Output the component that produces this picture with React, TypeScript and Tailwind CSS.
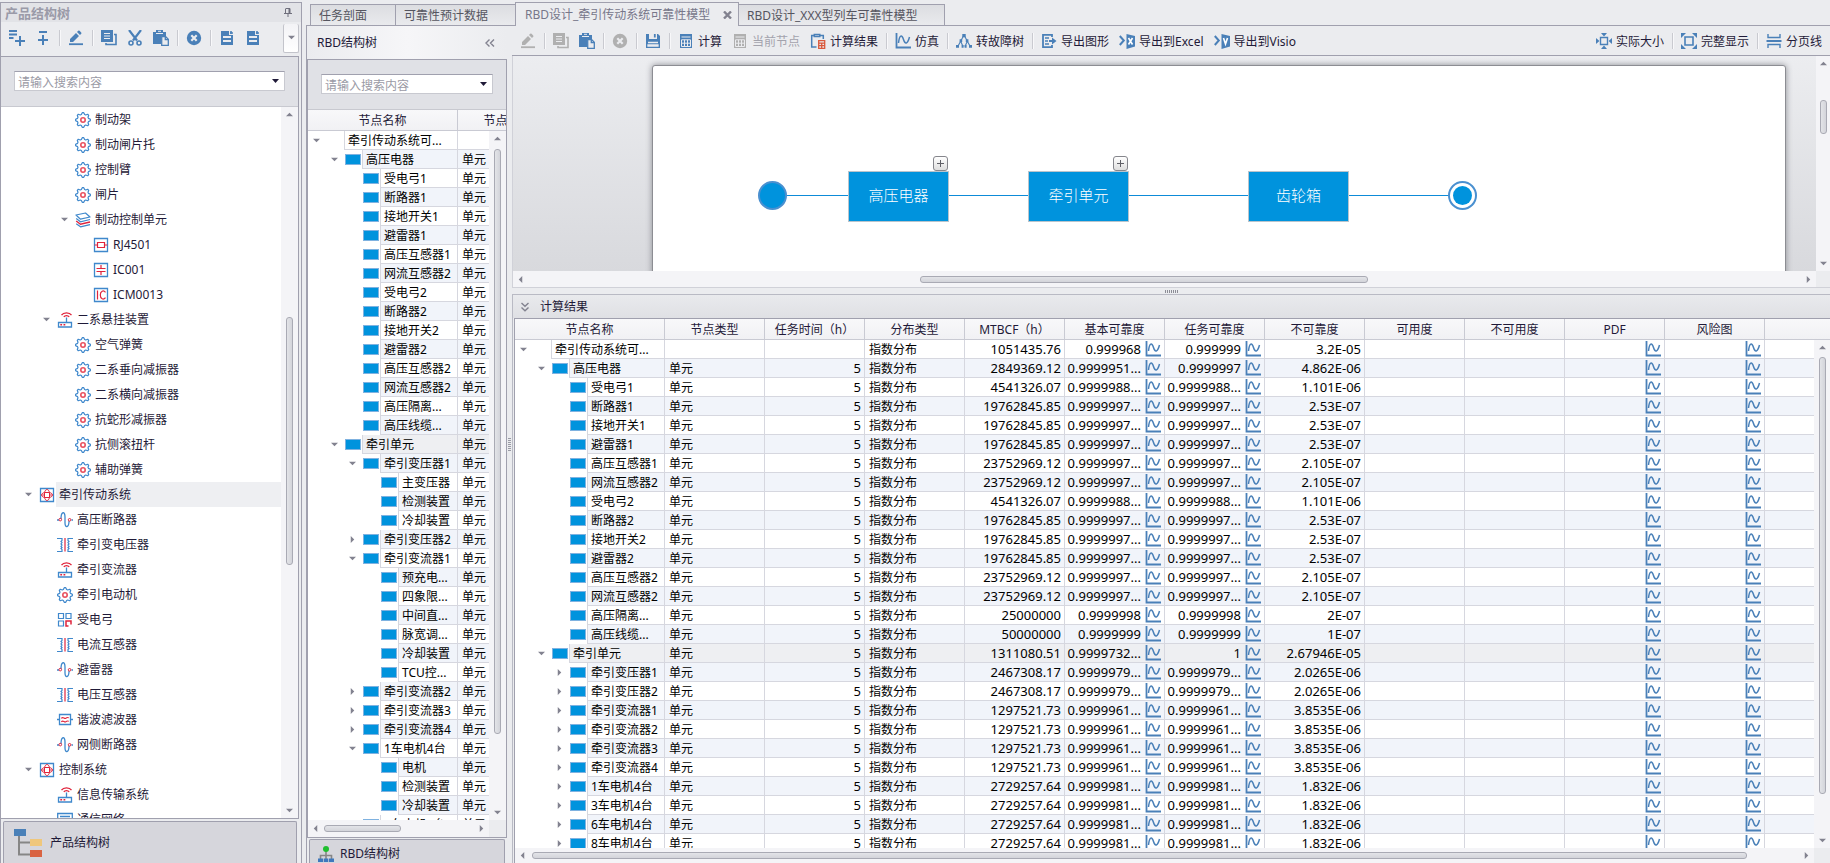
import type { ReactNode } from "react";
import clsx from "clsx";

/* ------------------------------------------------------------------ icons */

const BLUE = "#4a80b8";
const GRAY = "#b0b0b0";
const RED = "#e0243c";
const LINE = "#3f88cc";

function Svg({ children }: { children: ReactNode }) {
  return (
    <svg width="16" height="16" viewBox="0 0 16 16" fill="none" aria-hidden className="shrink-0">
      {children}
    </svg>
  );
}

const AddSiblingIcon = () => (
  <Svg>
    <path d="M0 1h8M0 4.5h8M0 8h4.500" stroke={BLUE} strokeWidth="2" />
    <path d="M11 6v10M6 11h10" stroke={BLUE} strokeWidth="2" />
  </Svg>
);
const AddChildIcon = () => (
  <Svg>
    <path d="M4 2h8M8 5v10M3 10h10" stroke={BLUE} strokeWidth="2" />
  </Svg>
);
const PencilIcon = ({ color = BLUE }: { color?: string }) => (
  <Svg>
    <path d="M1 14.2h14" stroke={color} strokeWidth="1.8" />
    <path d="M2 12v-3l6-6 3 3-6 6zM9 2l1.2-1.2a1 1 0 0 1 1.4 0l1.6 1.6a1 1 0 0 1 0 1.4L12 5z" fill={color} />
  </Svg>
);
const CopyIcon = ({ color = BLUE }: { color?: string }) => (
  <Svg>
    <path d="M0 0h12v12H0z" fill={color} />
    <path d="M3 3.5h6M3 6h6M3 8.5h6" stroke="#ebecef" />
    <path d="M13 4.5h2v10H5V13" stroke={color} strokeWidth="1.6" />
  </Svg>
);
const ScissorsIcon = () => (
  <Svg>
    <path d="M2 0l8 10.5M14 0L6 10.5" stroke={BLUE} strokeWidth="2.2" />
    <circle cx="4" cy="13" r="2" stroke={BLUE} strokeWidth="1.6" />
    <circle cx="12" cy="13" r="2" stroke={BLUE} strokeWidth="1.6" />
  </Svg>
);
const PasteIcon = () => (
  <Svg>
    <path d="M0 2h3V0h7v2h3v4H8v8H0z" fill={BLUE} />
    <path d="M3 3.5h7M5 1.3h3" stroke="#ebecef" />
    <path d="M8.7 6.7h4l2.6 2.6v6H8.7z" fill="#ebecef" stroke={BLUE} strokeWidth="1.3" />
    <path d="M12.3 6.5v3.2h3.2" stroke={BLUE} strokeWidth="1.3" />
  </Svg>
);
const CloseCircleIcon = ({ color = BLUE }: { color?: string }) => (
  <Svg>
    <circle cx="8" cy="8" r="7.2" fill={color} />
    <path d="M5.3 5.3l5.4 5.4M10.7 5.3l-5.4 5.4" stroke="#ebecef" strokeWidth="2.2" />
  </Svg>
);
const DocIcon = () => (
  <Svg>
    <path d="M2 1h8v4h4v10H2z" fill={BLUE} />
    <path d="M11 3h3M12 1v3" stroke={BLUE} strokeWidth="1.6" />
    <path d="M4 7h8M4 11h8" stroke="#ebecef" strokeWidth="2" />
  </Svg>
);
const SaveIcon = () => (
  <Svg>
    <path d="M1 1h3v5h8V1h1l2 2v12H1z" fill={BLUE} />
    <path d="M9.8 1v3.5" stroke={BLUE} strokeWidth="1.8" />
    <path d="M3 9.5h10M3 12h10v1H3z" stroke="#ebecef" strokeWidth="1.3" />
  </Svg>
);
const CalcIcon = ({ color = BLUE }: { color?: string }) => (
  <Svg>
    <path d="M2 1h12v14H2z" fill={color} />
    <path d="M3.5 4h9M3.5 6.8h9v6.7h-9zM3.5 10.2h9M6.5 6.8v6.7M9.5 6.8v6.7" stroke="#ebecef" />
  </Svg>
);
const ResultIcon = () => (
  <Svg>
    <path d="M6.5 14H1.7V2.5h2.6M10 2.5h3.3V6M4.3 3.6V1.5h5.500v2.100z" stroke={BLUE} strokeWidth="1.5" />
    <path d="M8.7 7.7h6v7.600h-6zM8.700 10.200h6M8.700 12.700h6M11.700 10.200v5" stroke="#d9593d" strokeWidth="1.3" />
  </Svg>
);
const CurveIcon = () => (
  <Svg>
    <path d="M1.5 0v14.500H16" stroke={BLUE} strokeWidth="1.8" />
    <path d="M3.500 10C4.500 1.500 7 1.500 8.500 6.500s4 5 6-2.500" stroke={BLUE} strokeWidth="1.5" />
  </Svg>
);
const FaultTreeIcon = () => (
  <Svg>
    <path d="M8 2L1.800 13.500M8 2l6.200 11.500M4.800 8.500L7 13.500M11.200 8.500L9 13.500" stroke={BLUE} strokeWidth="1.1" />
    <path d="M6.300 1h3.400v3.200H6.300zM3.600 6.300h2.600v2.600H3.600zM9.800 6.300h2.600v2.600H9.800zM0 12h3v2.800H0zM5.600 12h2v2.800h-2zM8.600 12h2v2.800h-2zM13 12h3v2.800h-3z" fill={BLUE} />
  </Svg>
);
const ExportIcon = () => (
  <Svg>
    <path d="M11 4V1.800H2v12.400h9V12" stroke={BLUE} strokeWidth="1.8" />
    <path d="M4 5h4M4 8h3M4 11h4" stroke={BLUE} strokeWidth="1.6" />
    <path d="M8 7h3V4.500l4.500 3.500L11 11.500V9H8z" fill={BLUE} />
  </Svg>
);
const OfficeIcon = ({ mark }: { mark: "x" | "v" }) => (
  <Svg>
    <path d="M0.8 3l4 4.500-4 4.500" stroke={BLUE} strokeWidth="2" />
    <path d="M7.500 1L16 3v10.500L7.500 16z" fill={BLUE} />
    <path d={mark === "x" ? "M9.500 5l4 6.500M13.500 5l-4 6.500" : "M9.500 5l2 6 2-6"} stroke="#fff" strokeWidth="1.6" />
  </Svg>
);
const ActualSizeIcon = () => (
  <Svg>
    <path d="M4.500 4.500h7v7h-7z" stroke={BLUE} strokeWidth="1.4" />
    <path d="M5 0h6L8 3.400zM5 16h6l-3-3.400zM0 5v6l3.400-3zM16 5v6l-3.400-3z" fill={BLUE} />
  </Svg>
);
const FitIcon = () => (
  <Svg>
    <path d="M4 4h8v8H4z" stroke={BLUE} strokeWidth="1.6" />
    <path d="M0 0h5L0 5zM16 0h-5l5 5zM0 16h5l-5-5zM16 16h-5l5-5z" fill={BLUE} />
  </Svg>
);
const PageBreakIcon = () => (
  <Svg>
    <path d="M2 1v3.500h12V1M2 15v-3.500h12V15" stroke={BLUE} strokeWidth="1.4" />
    <path d="M0.500 8h15" stroke={BLUE} strokeWidth="2" />
  </Svg>
);

// eight teeth: four points per tooth, outer pair then inner pair
const gearPath =
  Array.from({ length: 32 }, (_, i) => {
    const radius = i % 4 < 2 ? 7.4 : 5.7;
    const angle = ((i - 0.5) / 32) * Math.PI * 2;
    const x = 8 + radius * Math.sin(angle);
    const y = 8 - radius * Math.cos(angle);
    return `${i ? "L" : "M"}${x.toFixed(2)} ${y.toFixed(2)}`;
  }).join("") + "z";

const treeIcons = {
  gear: (
    <Svg>
      <path d={gearPath} stroke={LINE} strokeWidth="1.2" strokeLinejoin="round" />
      <circle cx="8" cy="8" r="2.2" stroke="#e8505e" strokeWidth="1.6" />
    </Svg>
  ),
  layers: (
    <Svg>
      <path d="M1 3l9.500-2L15 5 5.500 7.200zM1.200 11.800l4.300 3 9.500-2.200" stroke={LINE} strokeWidth="1.2" strokeLinejoin="round" />
      <path d="M1.200 6.500l4.300 3.300L15 7.500" stroke={LINE} strokeWidth="1.1" />
      <path d="M1.200 9l4.300 3.300L15 10" stroke={RED} strokeWidth="1.4" />
    </Svg>
  ),
  resistor: (
    <Svg>
      <path d="M1.500 1.500h13v13h-13z" stroke={LINE} strokeWidth="1.3" />
      <path d="M1.500 8H4M12 8h2.500M4.500 5.500h7v5h-7z" stroke={RED} strokeWidth="1.2" />
    </Svg>
  ),
  capacitor: (
    <Svg>
      <path d="M1.500 1.500h13v13h-13z" stroke={LINE} strokeWidth="1.3" />
      <path d="M3.500 6.500h9M3.500 9.500h9M8 3v3.500M8 9.500V13" stroke={RED} strokeWidth="1.2" />
    </Svg>
  ),
  chip: (
    <Svg>
      <path d="M1.500 1.500h13v13h-13z" stroke={LINE} strokeWidth="1.3" />
      <path d="M4.500 3.500v9M12.500 5.300C10.500 2.800 7.300 4 7.300 8s3.200 5.200 5.200 2.700" stroke={RED} strokeWidth="1.2" />
    </Svg>
  ),
  router: (
    <Svg>
      <path d="M1.500 10.500h13v4.500h-13zM9.500 10V5.500" stroke={LINE} strokeWidth="1.3" />
      <path d="M4.500 3.200C6.500.2 12.500.2 14.500 3.200M6.800 4.800c1.200-1.700 4.200-1.700 5.400 0" stroke={RED} strokeWidth="1.3" />
      <path d="M3.300 12h1.800v1.600H3.300zM6.500 12h1.800v1.600H6.500z" fill={RED} />
    </Svg>
  ),
  system: (
    <Svg>
      <path d="M1.500 1.500h13v13h-13z" stroke={LINE} strokeWidth="1.3" />
      <path
        d="M5.500 5.500h5v5h-5zM2.500 8h3M10.500 8h3M5.500 5.500C6 3.500 7 2.500 8 2.500s2 1 2.500 3M5.500 10.500c.5 2 1.500 3 2.500 3s2-1 2.500-3M5.500 5.500c-2 .5-3 1.500-3 2.500s1 2 3 2.500M10.500 5.500c2 .5 3 1.500 3 2.500s-1 2-3 2.500"
        stroke={RED}
      />
    </Svg>
  ),
  breaker: (
    <Svg>
      <path d="M0 8h2M14.500 8H16M4 7c0-8 4-8 4-2v6c0 5 4 5 4-2" stroke={LINE} strokeWidth="1.3" />
      <circle cx="3.300" cy="7.600" r="1.300" stroke={RED} />
      <circle cx="12.600" cy="7.800" r="1.300" stroke={RED} />
    </Svg>
  ),
  transformer: (
    <Svg>
      <path
        d="M0 1.500h5v2l-1 1 1 1-1 1.500 1 1-1 1.500 1 1-1 1 1 1v2H0M16 1.500h-5v2l1 1-1 1 1 1.500-1 1 1 1.500-1 1 1 1-1 1v2h5"
        stroke={LINE}
        strokeWidth="1.2"
      />
      <path d="M8 1v13.500" stroke={RED} strokeWidth="1.2" />
    </Svg>
  ),
  grid: (
    <Svg>
      <path d="M1.500 1.500h5v5h-5zM9 1.500h5v5H9zM1.500 9h5v5h-5z" stroke={LINE} strokeWidth="1.2" />
      <path d="M11.500 14H9V9h5v3.500" stroke={RED} strokeWidth="1.5" />
    </Svg>
  ),
  filter: (
    <Svg>
      <path d="M2.500 2.500h11v10h-11zM0 7.500h2.500M13.500 7.500H16" stroke={LINE} strokeWidth="1.3" />
      <path d="M4.300 6.300c2-2.200 3 1.200 4.500 0s2-.8 3-.5M4.300 9.800c2-2.200 3 1.200 4.500 0s2-.8 3-.5" stroke={RED} strokeWidth="1.1" />
    </Svg>
  ),
  network: (
    <Svg>
      <path d="M.7 1.500h14.600V15H.7zM3 4.500h10" stroke={LINE} strokeWidth="1.3" />
      <path d="M3.300 7h2v1.800h-2zM7 7h2v1.800H7z" fill={RED} />
    </Svg>
  ),
};

function Arrow({ dir }: { dir: "up" | "down" | "left" | "right" }) {
  const d = {
    up: "M0 6l4-4 4 4z",
    down: "M0 2l4 4 4-4z",
    left: "M6 0L2 4l4 4z",
    right: "M2 0l4 4-4 4z",
  }[dir];
  return (
    <svg width="7" height="7" viewBox="0 0 8 8" aria-hidden className="shrink-0">
      <path d={d} fill="#82828f" />
    </svg>
  );
}

/* --------------------------------------------------------------- controls */

function ToolButton({ icon, label, name, disabled }: { icon: ReactNode; label?: string; name?: string; disabled?: boolean }) {
  return (
    <button
      type="button"
      aria-label={name}
      disabled={disabled}
      className="flex shrink-0 items-center gap-1 whitespace-nowrap text-[#1f1a38] disabled:text-[#a3a3ad]"
    >
      {icon}
      {label && <span className="pt-[2px]">{label}</span>}
    </button>
  );
}

const Sep = () => <span className="h-4 w-px shrink-0 bg-[#c9cad0] shadow-[1px_0_0_#f8f8fa]" />;

const Group = ({ children }: { children: ReactNode }) => <div className="flex items-center gap-[10px]">{children}</div>;

function SearchBox({ id }: { id: string }) {
  return (
    <div className="h-[50px] shrink-0 border-b border-[#c8c9d0] bg-[#e0e1e6] px-[13px] pt-[14px]">
      <div className="flex h-5 items-center border border-[#c8c9d0] border-t-[#a0a0ae] bg-white pl-[3px] pr-[5px]">
        <input
          id={id}
          type="text"
          aria-label="搜索"
          placeholder="请输入搜索内容"
          className="min-w-0 flex-1 bg-transparent pt-[3px] text-[12px] outline-none placeholder:text-[#9a9aa5]"
        />
        <button type="button" aria-label="展开搜索选项" className="shrink-0">
          <svg width="7" height="4" viewBox="0 0 7 4" aria-hidden>
            <path d="M0 0h7L3.500 4z" fill="#1f1a38" />
          </svg>
        </button>
      </div>
    </div>
  );
}

/** `before`, `size` and `after` share the free length of the track. */
function ScrollBar({ vertical, before, size, after, className }: { vertical?: boolean; before: number; size: number; after: number; className?: string }) {
  return (
    <div
      aria-hidden
      className={clsx("flex shrink-0 items-center bg-[#f4f4f7]", vertical ? "flex-col py-1" : "px-1", className)}
    >
      <Arrow dir={vertical ? "up" : "left"} />
      <span style={{ flexGrow: before }} />
      <span
        style={{ flexGrow: size }}
        className={clsx(
          "rounded-[3px] border border-[#a9aab4] from-[#e3e4e8] to-[#d3d4da]",
          vertical ? "w-[7px] bg-linear-to-r" : "h-[7px] bg-linear-to-b",
        )}
      />
      <span style={{ flexGrow: after }} />
      <Arrow dir={vertical ? "down" : "right"} />
    </div>
  );
}

/* ----------------------------------------------------------- product tree */

type ProductRow = { level: 1 | 2 | 3 | 4; icon: keyof typeof treeIcons; label: string; open?: boolean; selected?: boolean };

const productRows: ProductRow[] = [
  { level: 3, icon: "gear", label: "制动架" },
  { level: 3, icon: "gear", label: "制动闸片托" },
  { level: 3, icon: "gear", label: "控制臂" },
  { level: 3, icon: "gear", label: "闸片" },
  { level: 3, icon: "layers", label: "制动控制单元", open: true },
  { level: 4, icon: "resistor", label: "RJ4501" },
  { level: 4, icon: "capacitor", label: "IC001" },
  { level: 4, icon: "chip", label: "ICM0013" },
  { level: 2, icon: "router", label: "二系悬挂装置", open: true },
  { level: 3, icon: "gear", label: "空气弹簧" },
  { level: 3, icon: "gear", label: "二系垂向减振器" },
  { level: 3, icon: "gear", label: "二系横向减振器" },
  { level: 3, icon: "gear", label: "抗蛇形减振器" },
  { level: 3, icon: "gear", label: "抗侧滚扭杆" },
  { level: 3, icon: "gear", label: "辅助弹簧" },
  { level: 1, icon: "system", label: "牵引传动系统", open: true, selected: true },
  { level: 2, icon: "breaker", label: "高压断路器" },
  { level: 2, icon: "transformer", label: "牵引变电压器" },
  { level: 2, icon: "router", label: "牵引变流器" },
  { level: 2, icon: "gear", label: "牵引电动机" },
  { level: 2, icon: "grid", label: "受电弓" },
  { level: 2, icon: "transformer", label: "电流互感器" },
  { level: 2, icon: "breaker", label: "避雷器" },
  { level: 2, icon: "transformer", label: "电压互感器" },
  { level: 2, icon: "filter", label: "谐波滤波器" },
  { level: 2, icon: "breaker", label: "网侧断路器" },
  { level: 1, icon: "system", label: "控制系统", open: true },
  { level: 2, icon: "router", label: "信息传输系统" },
  { level: 2, icon: "network", label: "通信网络" },
];

const productIndent = { 1: "pl-[24px]", 2: "pl-[42px]", 3: "pl-[60px]", 4: "pl-[78px]" };

function ProductPanel() {
  return (
    <aside className="mt-[2px] flex w-[302px] shrink-0 flex-col border-x border-t border-[#a0a0ae]">
      <header className="flex h-[19px] shrink-0 items-center justify-between bg-[#e2e3e7] pl-1 pr-[9px]">
        <h2 className="text-[13px] font-bold text-[#9a9aa8]">产品结构树</h2>
        <button type="button" aria-label="固定面板">
          <svg width="8" height="9" viewBox="0 0 8 9" fill="none" aria-hidden>
            <path d="M2 .5h4v5M1.500.5v5M0 5.500h8M4 5.500V9" stroke="#6f6f7c" />
            <path d="M4.500 1h1.500v4.500H4.500z" fill="#6f6f7c" />
          </svg>
        </button>
      </header>
      <div className="flex h-[34px] shrink-0 items-center justify-between pb-[2px] pl-2 pr-[2px]">
        <div className="flex items-center gap-2">
          <Group>
            <ToolButton name="添加同级" icon={<AddSiblingIcon />} />
            <ToolButton name="添加子级" icon={<AddChildIcon />} />
          </Group>
          <Sep />
          <ToolButton name="编辑" icon={<PencilIcon />} />
          <Sep />
          <Group>
            <ToolButton name="复制" icon={<CopyIcon />} />
            <ToolButton name="剪切" icon={<ScissorsIcon />} />
            <ToolButton name="粘贴" icon={<PasteIcon />} />
          </Group>
          <Sep />
          <ToolButton name="删除" icon={<CloseCircleIcon />} />
          <Sep />
          <Group>
            <ToolButton name="导入" icon={<DocIcon />} />
            <ToolButton name="导出" icon={<DocIcon />} />
          </Group>
        </div>
        <button
          type="button"
          aria-label="更多"
          className="flex h-[29px] w-4 items-center justify-center rounded-[2px] border-x border-b border-[#c3c4cb] bg-linear-to-b from-[#f3f3f6] to-white"
        >
          <Arrow dir="down" />
        </button>
      </div>
      <div className="mr-[2px] flex min-h-0 flex-1 flex-col border-y border-r border-[#a0a0ae] bg-white">
        <SearchBox id="product-search" />
        <div className="flex min-h-0 flex-1">
          <ul className="min-w-0 flex-1 overflow-hidden">
            {productRows.map((row, i) => (
              <li key={i} className={clsx("flex h-[25px] items-center", productIndent[row.level])}>
                <span className="flex w-[14px] shrink-0">{row.open && <Arrow dir="down" />}</span>
                {treeIcons[row.icon]}
                <span
                  className={clsx(
                    "ml-px flex h-full flex-1 items-center whitespace-nowrap pl-[3px] text-[#1f1a38]",
                    row.selected && "bg-[#eeeff2]",
                  )}
                >
                  {row.label}
                </span>
              </li>
            ))}
          </ul>
          <ScrollBar vertical before={200} size={246} after={243} className="w-[17px]" />
        </div>
      </div>
      <button
        type="button"
        className="ml-[2px] mr-1 mt-[2px] flex h-[42px] shrink-0 items-center gap-2 rounded-t-[2px] border-x border-t border-[#a0a0ae] bg-[#d6d6dc] pl-[10px] pt-px text-[#1f1a38]"
      >
        <svg width="28" height="28" viewBox="0 0 28 28" fill="none" aria-hidden>
          <path d="M5 7v18.500h11M5 13.500h11" stroke="#868686" strokeWidth="2" />
          <path d="M0 0h12v7H0z" fill="#4a80b8" />
          <path d="M16 10h12v7H16z" fill="#efc77c" />
          <path d="M16 21h12v7H16z" fill="#d96342" />
        </svg>
        产品结构树
      </button>
    </aside>
  );
}

/* ------------------------------------------------------------ grid pieces */

type Level = 0 | 1 | 2 | 3;

const gridIndent = { 0: "w-[36px]", 1: "w-[54px]", 2: "w-[72px]", 3: "w-[90px]" };

const th = "border-b border-r border-[#c9cad3] bg-linear-to-b from-[#f8f8fa] to-[#f1f1f4] px-0 pb-0 pt-px text-center font-normal text-[#1f1a38]";
const td = "border-b border-r border-[#d6d7df]";
const textCell = "pb-0 pl-1 pr-0 pt-[2px] leading-[16px]";
const numberCell = "py-0 pl-0 pr-[3px] text-right text-[13px]";

function rowColor(i: number, selected?: boolean) {
  if (selected) return "bg-[#eeeff2]";
  return i % 2 ? "bg-[#f1f4fa]" : "bg-white";
}

function NameCell({ level, state, label, color }: { level: Level; state?: "open" | "closed"; label: string; color: string }) {
  return (
    <td className="h-[19px] border-r border-[#d6d7df] bg-white p-0">
      <div className="flex h-[19px]">
        <span className={clsx("flex shrink-0 items-center justify-end gap-[7px] pr-px", gridIndent[level])}>
          {state && <Arrow dir={state === "open" ? "down" : "right"} />}
          {level > 0 ? <span className="h-[11px] w-4 border border-[#7fb2e0] bg-[#0093dd]" /> : <span className="w-4" />}
        </span>
        <span
          className={clsx(
            "min-w-0 flex-1 overflow-hidden whitespace-nowrap border-b border-l border-[#d6d7df] pl-[3px] pt-[2px] leading-[16px]",
            color,
          )}
        >
          {label}
        </span>
      </div>
    </td>
  );
}

/* --------------------------------------------------------------- RBD tree */

type RbdRow = [level: Level, label: string, state?: "open" | "closed"];

const rbdRows: RbdRow[] = [
  [0, "牵引传动系统可...", "open"],
  [1, "高压电器", "open"],
  [2, "受电弓1"],
  [2, "断路器1"],
  [2, "接地开关1"],
  [2, "避雷器1"],
  [2, "高压互感器1"],
  [2, "网流互感器2"],
  [2, "受电弓2"],
  [2, "断路器2"],
  [2, "接地开关2"],
  [2, "避雷器2"],
  [2, "高压互感器2"],
  [2, "网流互感器2"],
  [2, "高压隔离..."],
  [2, "高压线缆..."],
  [1, "牵引单元", "open"],
  [2, "牵引变压器1", "open"],
  [3, "主变压器"],
  [3, "检测装置"],
  [3, "冷却装置"],
  [2, "牵引变压器2", "closed"],
  [2, "牵引变流器1", "open"],
  [3, "预充电..."],
  [3, "四象限..."],
  [3, "中间直..."],
  [3, "脉宽调..."],
  [3, "冷却装置"],
  [3, "TCU控..."],
  [2, "牵引变流器2", "closed"],
  [2, "牵引变流器3", "closed"],
  [2, "牵引变流器4", "closed"],
  [2, "1车电机4台", "open"],
  [3, "电机"],
  [3, "检测装置"],
  [3, "冷却装置"],
  [2, "3车电机4台", "closed"],
];

function RbdPanel() {
  return (
    <aside className="flex w-[201px] shrink-0 flex-col border-l border-[#a0a0ae]">
      <header className="flex h-[33px] shrink-0 items-center justify-between bg-linear-to-r from-[#ebecef] via-[#f6f6f8] to-[#ebecef] pl-[10px] pr-3">
        <h2 className="text-[#1f1a38]">RBD结构树</h2>
        <button type="button" aria-label="折叠">
          <svg width="10" height="8" viewBox="0 0 10 8" fill="none" aria-hidden>
            <path d="M4.500.5L1 4l3.500 3.500M9 .5L5.500 4 9 7.500" stroke="#82828f" strokeWidth="1.4" />
          </svg>
        </button>
      </header>
      <div className="flex min-h-0 flex-1 flex-col border border-[#a0a0ae] bg-white">
        <SearchBox id="rbd-search" />
        <div className="relative min-h-0 flex-1 overflow-hidden">
          <table className="w-[250px] table-fixed border-separate border-spacing-0 text-black">
            <colgroup>
              <col className="w-[150px]" />
              <col className="w-[100px]" />
            </colgroup>
            <thead>
              <tr className="h-[21px]">
                <th className={th}>节点名称</th>
                <th className={th}>节点类型</th>
              </tr>
            </thead>
            <tbody>
              {rbdRows.map(([level, label, state], i) => {
                const color = rowColor(i, label === "牵引单元");
                return (
                  <tr key={i}>
                    <NameCell level={level} state={state} label={label} color={color} />
                    <td className={clsx(td, textCell, color)}>{level > 0 && "单元"}</td>
                  </tr>
                );
              })}
            </tbody>
          </table>
          <ScrollBar vertical before={7} size={588} after={76} className="absolute bottom-0 right-0 top-[21px] w-[17px]" />
        </div>
        <div className="flex h-[17px] shrink-0 bg-[#ebecef]">
          <ScrollBar before={5} size={75} after={78} className="flex-1" />
          <span className="w-[17px]" />
        </div>
      </div>
      <button
        type="button"
        className="mx-[2px] mt-px flex h-[24px] shrink-0 items-center gap-[6px] overflow-hidden rounded-t-[2px] border-x border-t border-[#a0a0ae] bg-[#d6d6dc] pl-2 pt-1 text-[#1f1a38]"
      >
        <svg width="16" height="16" viewBox="0 0 16 16" fill="none" aria-hidden>
          <path d="M8 5v8M2.500 13V9.500h11V13" stroke="#868686" strokeWidth="1.6" />
          <circle cx="8" cy="3" r="3" fill="#1fbf2f" />
          <path d="M0 12.500h5V16H0zM5.700 12.500h4.600V16H5.700zM11 12.500h5V16h-5z" fill="#3f78bd" />
        </svg>
        RBD结构树
      </button>
    </aside>
  );
}

/* ----------------------------------------------------------------- canvas */

const blocks = [
  { label: "高压电器", pos: "left-[195px]", expandable: true },
  { label: "牵引单元", pos: "left-[375px]", expandable: true },
  { label: "齿轮箱", pos: "left-[595px]", expandable: false },
];

function Canvas() {
  return (
    <section aria-label="可靠性框图" className="flex h-[232px] shrink-0 flex-col border-b border-l border-[#d0d1d8]">
      <div className="flex min-h-0 flex-1">
        <div className="min-w-0 flex-1 overflow-hidden bg-linear-to-b from-[#ecedf0] to-[#d8d9dd] pl-[139px] pr-[30px] pt-[9px]">
          <div className="relative h-[240px] rounded-[3px] border border-[#8c8d93] bg-white shadow-[0_0_6px_#8c8d93]">
            <span className="absolute left-[134px] top-[129px] h-px w-[663px] bg-[#0d8bd8]" />
            <span className="absolute left-[105px] top-[115px] size-[29px] rounded-full border-2 border-[#4a90d0] bg-[#0093dd]" />
            {blocks.map((b) => (
              <div
                key={b.label}
                className={clsx(
                  "absolute top-[105px] flex h-[51px] w-[101px] items-center justify-center border border-[#b9c4cc] bg-[#0093dd] pb-[3px] text-[15px] font-light text-white",
                  b.pos,
                )}
              >
                {b.label}
                {b.expandable && (
                  <button
                    type="button"
                    aria-label={`展开${b.label}`}
                    className="absolute -top-4 right-0 flex size-[15px] items-center justify-center rounded-[3px] border border-[#85868c] bg-linear-to-b from-white to-[#dedede]"
                  >
                    <svg width="7" height="7" viewBox="0 0 7 7" aria-hidden>
                      <path d="M3.500 0v7M0 3.500h7" stroke="#5f5f66" />
                    </svg>
                  </button>
                )}
              </div>
            ))}
            <span className="absolute left-[795px] top-[115px] flex size-[29px] items-center justify-center rounded-full border-2 border-[#4a90d0] bg-white">
              <span className="size-[19px] rounded-full bg-[#0093dd]" />
            </span>
          </div>
        </div>
        <ScrollBar vertical before={33} size={32} after={126} className="w-[14px]" />
      </div>
      <div className="flex h-4 shrink-0 bg-[#ebecef]">
        <ScrollBar before={396} size={447} after={437} className="flex-1" />
        <span className="w-[14px]" />
      </div>
    </section>
  );
}

/* ---------------------------------------------------------------- results */

type ResultRow = {
  level: Level;
  label: string;
  state?: "open" | "closed";
  mtbcf: string;
  basic: string;
  mission: string;
  unreliability: string;
};

const leaf = (label: string, mtbcf: string, basic: string, unreliability: string, state?: "closed"): ResultRow => ({
  level: 2,
  label,
  state,
  mtbcf,
  basic,
  mission: basic,
  unreliability,
});

const resultRows: ResultRow[] = [
  { level: 0, label: "牵引传动系统可...", state: "open", mtbcf: "1051435.76", basic: "0.999968", mission: "0.999999", unreliability: "3.2E-05" },
  { level: 1, label: "高压电器", state: "open", mtbcf: "2849369.12", basic: "0.9999951...", mission: "0.9999997", unreliability: "4.862E-06" },
  leaf("受电弓1", "4541326.07", "0.9999988...", "1.101E-06"),
  leaf("断路器1", "19762845.85", "0.9999997...", "2.53E-07"),
  leaf("接地开关1", "19762845.85", "0.9999997...", "2.53E-07"),
  leaf("避雷器1", "19762845.85", "0.9999997...", "2.53E-07"),
  leaf("高压互感器1", "23752969.12", "0.9999997...", "2.105E-07"),
  leaf("网流互感器2", "23752969.12", "0.9999997...", "2.105E-07"),
  leaf("受电弓2", "4541326.07", "0.9999988...", "1.101E-06"),
  leaf("断路器2", "19762845.85", "0.9999997...", "2.53E-07"),
  leaf("接地开关2", "19762845.85", "0.9999997...", "2.53E-07"),
  leaf("避雷器2", "19762845.85", "0.9999997...", "2.53E-07"),
  leaf("高压互感器2", "23752969.12", "0.9999997...", "2.105E-07"),
  leaf("网流互感器2", "23752969.12", "0.9999997...", "2.105E-07"),
  leaf("高压隔离...", "25000000", "0.9999998", "2E-07"),
  leaf("高压线缆...", "50000000", "0.9999999", "1E-07"),
  { level: 1, label: "牵引单元", state: "open", mtbcf: "1311080.51", basic: "0.9999732...", mission: "1", unreliability: "2.67946E-05" },
  leaf("牵引变压器1", "2467308.17", "0.9999979...", "2.0265E-06", "closed"),
  leaf("牵引变压器2", "2467308.17", "0.9999979...", "2.0265E-06", "closed"),
  leaf("牵引变流器1", "1297521.73", "0.9999961...", "3.8535E-06", "closed"),
  leaf("牵引变流器2", "1297521.73", "0.9999961...", "3.8535E-06", "closed"),
  leaf("牵引变流器3", "1297521.73", "0.9999961...", "3.8535E-06", "closed"),
  leaf("牵引变流器4", "1297521.73", "0.9999961...", "3.8535E-06", "closed"),
  leaf("1车电机4台", "2729257.64", "0.9999981...", "1.832E-06", "closed"),
  leaf("3车电机4台", "2729257.64", "0.9999981...", "1.832E-06", "closed"),
  leaf("6车电机4台", "2729257.64", "0.9999981...", "1.832E-06", "closed"),
  leaf("8车电机4台", "2729257.64", "0.9999981...", "1.832E-06", "closed"),
];

const resultColumns = ["节点名称", "节点类型", "任务时间（h）", "分布类型", "MTBCF（h）", "基本可靠度", "任务可靠度", "不可靠度", "可用度", "不可用度", "PDF", "风险图"];

function ChartCell({ value, color, title }: { value?: string; color: string; title: string }) {
  return (
    <td className={clsx(td, "p-0", color)}>
      <div className="flex h-[18px] items-center justify-end gap-1 pr-[3px] text-[13px]">
        {value}
        <button type="button" aria-label={title}>
          <CurveIcon />
        </button>
      </div>
    </td>
  );
}

function Results() {
  return (
    <section className="flex min-h-0 flex-1 flex-col border-l border-t border-[#b9bac4]">
      <header className="flex h-[23px] shrink-0 items-center gap-[11px] bg-linear-to-b from-[#e9eaed] to-[#dfe0e4] pl-2">
        <button type="button" aria-label="折叠结果">
          <svg width="8" height="10" viewBox="0 0 8 10" fill="none" aria-hidden>
            <path d="M.5 1L4 4.300 7.500 1M.5 5.500L4 8.800l3.500-3.300" stroke="#82828f" strokeWidth="1.4" />
          </svg>
        </button>
        <h2 className="text-[#1f1a38]">计算结果</h2>
      </header>
      <div className="ml-px flex min-h-0 flex-1 flex-col border-l border-t border-[#a0a0ae] bg-white">
        <div className="relative min-h-0 flex-1 overflow-hidden">
          <table className="w-full table-fixed border-separate border-spacing-0 text-black">
            <colgroup>
              <col className="w-[150px]" />
              {resultColumns.slice(1).map((c) => (
                <col key={c} className="w-[100px]" />
              ))}
              <col />
            </colgroup>
            <thead>
              <tr className="h-[21px]">
                {resultColumns.map((c) => (
                  <th key={c} className={th}>
                    {c}
                  </th>
                ))}
                <td className={clsx(th, "border-r-0")} />
              </tr>
            </thead>
            <tbody>
              {resultRows.map((row, i) => {
                const color = rowColor(i, row.label === "牵引单元");
                const cell = clsx(td, color);
                return (
                  <tr key={i}>
                    <NameCell level={row.level} state={row.state} label={row.label} color={color} />
                    <td className={clsx(cell, textCell)}>{row.level > 0 && "单元"}</td>
                    <td className={clsx(cell, numberCell)}>{row.level > 0 && "5"}</td>
                    <td className={clsx(cell, textCell)}>指数分布</td>
                    <td className={clsx(cell, numberCell)}>{row.mtbcf}</td>
                    <ChartCell value={row.basic} color={color} title="基本可靠度曲线" />
                    <ChartCell value={row.mission} color={color} title="任务可靠度曲线" />
                    <td className={clsx(cell, numberCell)}>{row.unreliability}</td>
                    <td className={cell} />
                    <td className={cell} />
                    <ChartCell color={color} title="PDF曲线" />
                    <ChartCell color={color} title="风险图曲线" />
                    <td className={clsx(cell, "border-r-0")} />
                  </tr>
                );
              })}
            </tbody>
          </table>
          <ScrollBar vertical before={6} size={440} after={43} className="absolute bottom-0 right-0 top-[21px] w-[16px]" />
        </div>
        <div className="flex h-[15px] shrink-0 bg-[#ebecef]">
          <ScrollBar before={6} size={1215} after={56} className="flex-1" />
          <span className="w-[16px]" />
        </div>
      </div>
    </section>
  );
}

/* ------------------------------------------------------------------- page */

function DesignToolbar() {
  return (
    <div className="flex h-[30px] shrink-0 items-center justify-between border-b border-[#a0a0ae] pl-2 pr-2">
      <div className="flex items-center gap-2">
        <ToolButton name="编辑" disabled icon={<PencilIcon color={GRAY} />} />
        <Sep />
        <Group>
          <ToolButton name="复制" disabled icon={<CopyIcon color={GRAY} />} />
          <ToolButton name="粘贴" icon={<PasteIcon />} />
        </Group>
        <Sep />
        <ToolButton name="删除" disabled icon={<CloseCircleIcon color={GRAY} />} />
        <Sep />
        <ToolButton name="保存" icon={<SaveIcon />} />
        <Sep />
        <Group>
          <ToolButton icon={<CalcIcon />} label="计算" />
          <ToolButton disabled icon={<CalcIcon color={GRAY} />} label="当前节点" />
          <ToolButton icon={<ResultIcon />} label="计算结果" />
        </Group>
        <Sep />
        <ToolButton icon={<CurveIcon />} label="仿真" />
        <Sep />
        <ToolButton icon={<FaultTreeIcon />} label="转故障树" />
        <Sep />
        <Group>
          <ToolButton icon={<ExportIcon />} label="导出图形" />
          <ToolButton icon={<OfficeIcon mark="x" />} label="导出到Excel" />
          <ToolButton icon={<OfficeIcon mark="v" />} label="导出到Visio" />
        </Group>
      </div>
      <div className="flex items-center gap-2">
        <ToolButton icon={<ActualSizeIcon />} label="实际大小" />
        <Sep />
        <ToolButton icon={<FitIcon />} label="完整显示" />
        <Sep />
        <ToolButton icon={<PageBreakIcon />} label="分页线" />
      </div>
    </div>
  );
}

const tab = "flex h-[21px] shrink-0 items-center whitespace-nowrap border-l border-t border-[#a0a0ae] bg-linear-to-b from-[#dcdde1] to-[#e9eaed] px-2 pt-[2px] text-[#55555f]";

function Tabs() {
  return (
    <div role="tablist" className="flex h-[26px] shrink-0 items-end border-b border-[#a0a0ae] pl-1">
      <button type="button" role="tab" aria-selected={false} className={clsx(tab, "w-[85px]")}>
        任务剖面
      </button>
      <button type="button" role="tab" aria-selected={false} className={clsx(tab, "w-[120px]")}>
        可靠性预计数据
      </button>
      <div className="-mb-px flex h-[24px] w-[224px] shrink-0 items-center justify-between border-x border-t border-[#a0a0ae] bg-[#ebecef] pl-[9px] pr-[6px] text-[#77778a]">
        <button type="button" role="tab" aria-selected className="whitespace-nowrap pt-px">
          RBD设计_牵引传动系统可靠性模型
        </button>
        <button type="button" aria-label="关闭标签">
          <svg width="9" height="8" viewBox="0 0 9 8" fill="none" aria-hidden>
            <path d="M1 .5l7 7M8 .5l-7 7" stroke="#82828f" strokeWidth="2.4" />
          </svg>
        </button>
      </div>
      <button type="button" role="tab" aria-selected={false} className={clsx(tab, "w-[206px] border-l-0 border-r")}>
        RBD设计_XXX型列车可靠性模型
      </button>
    </div>
  );
}

export default function App() {
  return (
    <div className="flex h-screen overflow-hidden bg-[#ebecef] font-['Noto_Sans','Noto_Sans_CJK_SC',sans-serif] text-[12px] leading-[18px]">
      <ProductPanel />
      <main className="ml-1 flex min-w-0 flex-1 flex-col">
        <Tabs />
        <div className="flex min-h-0 flex-1">
          <RbdPanel />
          <div className="flex w-[5px] shrink-0 items-center justify-center" aria-hidden>
            <span className="h-[13px] w-[3px] bg-[repeating-linear-gradient(#9a9ba5_0_1px,transparent_1px_2px)]" />
          </div>
          <div className="flex min-w-0 flex-1 flex-col">
            <DesignToolbar />
            <Canvas />
            <div className="flex h-[6px] shrink-0 items-center justify-center" aria-hidden>
              <span className="h-[3px] w-[13px] bg-[repeating-linear-gradient(90deg,#8c8d96_0_1px,transparent_1px_2px)]" />
            </div>
            <Results />
          </div>
        </div>
      </main>
    </div>
  );
}
